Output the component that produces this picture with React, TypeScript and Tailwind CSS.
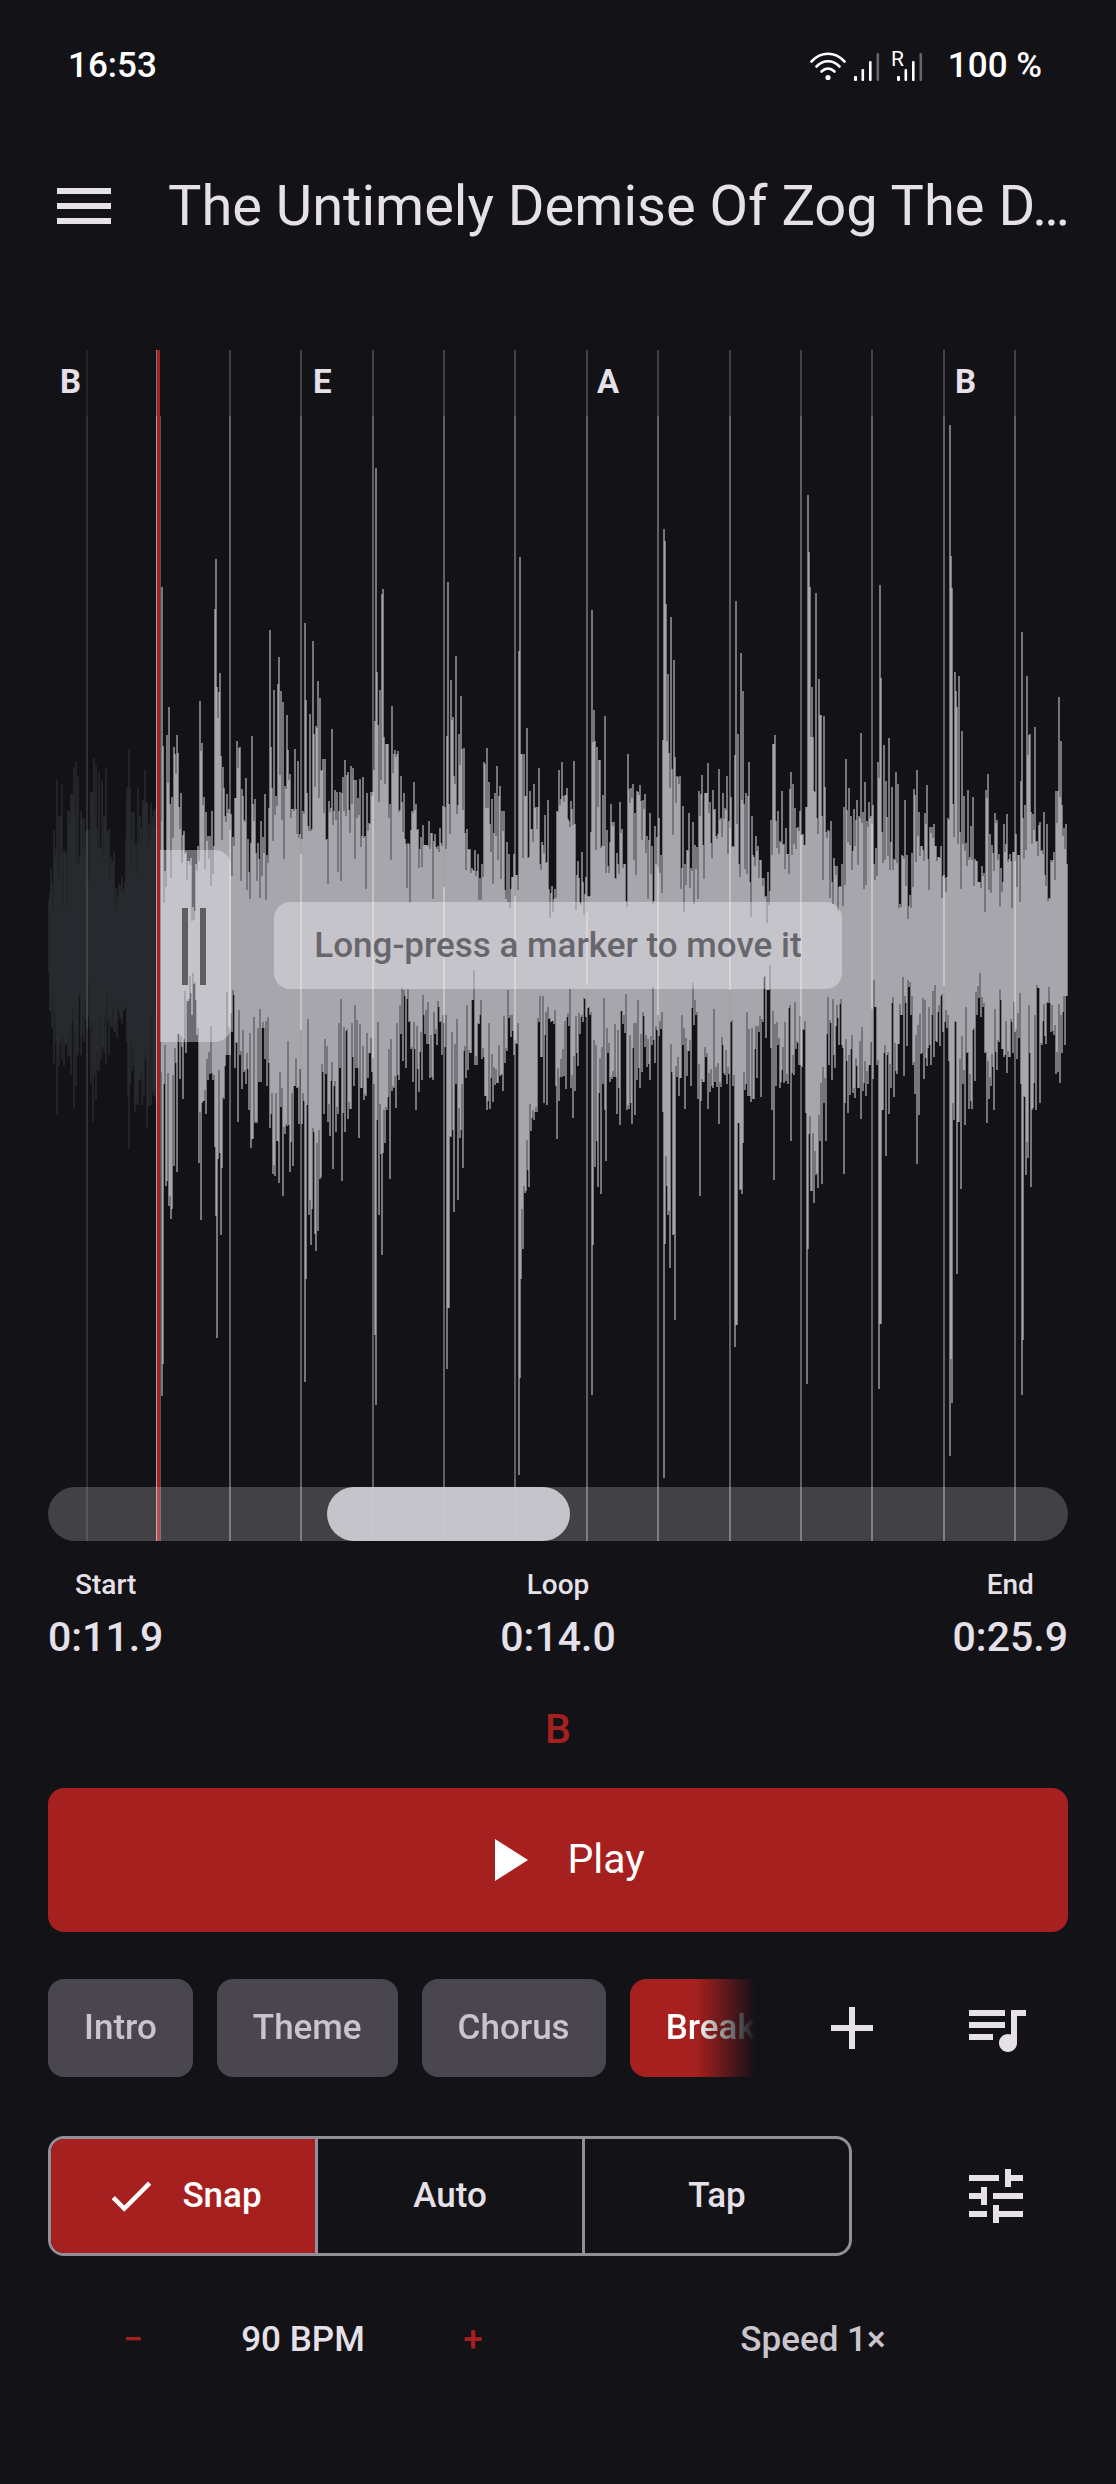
import { useState } from "react"
import { MdAdd, MdCheck, MdMenu, MdPlayArrow, MdQueueMusic, MdTune } from "react-icons/md"

// Canvas of the waveform view. Peaks are stored as [x, y] in page units, see ORIGIN.
const ORIGIN = { x: 48, y: 350 }
const WIDTH = 1020
const HEIGHT = 1191
const CENTER = 945
const LOOP_START = 158

const BEAT_SPACING = 71.4
const BEATS = Array.from({ length: 14 }, (_, i) => Math.round(87 + i * BEAT_SPACING))

const CHORDS = [
  { name: "B", x: 48 },
  { name: "E", x: 301 },
  { name: "A", x: 585 },
  { name: "B", x: 943 },
]

const TOPS = `48,889 51,869 54,830 57,780 59,816 62,784 64,850 68,811 71,794 74,767 76,762 78,777 81,811 84,818 87,830
91,792 94,758 96,766 99,772 102,781 104,816 106,769 109,829 111,857 114,851 119,884 122,877 125,882 126,839 127,787
129,749 130,789 132,812 134,812 136,843 138,788 140,816 143,800 145,770 147,802 149,823 151,803 154,810 156,809
160,820 162,587 163,746 165,871 167,735 169,707 170,804 172,797 173,838 174,747 177,735 178,753 181,793 184,831
186,852 189,861 191,858 193,907 196,864 198,846 200,701 202,743 204,797 206,812 208,836 212,811 214,846 215,609
216,559 217,687 220,673 221,756 223,767 224,788 225,816 227,794 229,809 231,814 233,837 235,798 237,741 240,747
242,789 246,778 248,839 252,736 255,799 258,843 261,821 263,837 265,794 267,855 269,808 270,630 271,747 274,690
276,796 278,684 279,657 281,691 283,702 285,786 287,715 288,750 290,774 292,809 295,749 298,761 300,834 303,811
305,623 306,700 307,793 310,714 313,641 316,726 318,681 320,698 323,759 325,759 327,839 329,801 332,729 335,790
337,792 340,792 343,777 345,760 348,772 351,766 353,768 356,780 358,798 360,779 363,777 365,836 367,793 369,823
371,792 374,770 375,721 376,468 377,672 378,725 380,690 382,594 383,589 384,737 386,744 388,744 390,804 392,706
395,750 398,751 401,776 404,793 405,839 408,843 411,830 412,811 414,782 416,804 418,829 421,837 423,825 425,845
429,821 432,833 435,834 438,846 440,828 443,806 445,807 447,736 448,582 449,804 451,680 453,717 454,776 456,656
459,734 461,696 464,748 465,833 467,829 470,849 472,868 475,850 478,854 482,864 484,762 487,748 489,782 492,799
495,793 497,766 500,786 502,811 504,811 507,842 509,854 513,877 514,854 517,875 519,651 520,557 522,754 524,754
525,796 527,728 530,791 531,829 534,784 536,807 539,768 540,864 542,842 545,815 548,800 549,889 552,886 555,889
557,811 559,770 562,762 565,795 567,788 568,819 571,801 574,761 575,824 578,861 582,852 583,882 586,877 590,896
591,832 592,610 594,710 595,741 597,747 600,760 602,846 603,795 605,716 607,830 611,804 614,822 617,853 620,802
622,829 625,864 628,754 631,788 633,784 635,813 637,791 640,785 643,800 645,794 647,836 650,813 652,846 655,826
657,837 659,818 661,855 663,740 664,529 665,541 666,604 668,674 669,753 671,617 672,769 674,660 675,757 677,776
680,776 683,806 685,864 687,850 689,813 691,868 693,822 695,845 699,791 702,775 703,845 705,793 708,763 710,802
713,790 715,809 719,769 721,818 723,793 725,808 727,776 729,821 731,797 733,846 735,755 736,601 738,734 739,864
741,653 743,691 744,804 746,793 749,762 750,882 752,816 753,855 756,836 758,846 761,860 764,878 766,896 768,872
770,891 771,820 773,744 775,735 776,821 778,811 780,841 782,791 784,844 786,828 788,854 790,789 791,772 793,784
795,808 798,827 800,811 803,834 805,845 806,807 808,495 809,552 810,587 812,687 813,737 814,791 816,593 817,818
819,679 821,715 822,816 824,716 825,787 828,830 831,821 832,882 834,858 837,866 840,886 842,864 844,807 846,759
849,788 851,816 854,809 857,800 859,816 861,733 863,812 865,782 867,821 869,802 871,816 873,805 874,864 876,848
878,762 880,585 881,678 882,832 884,745 886,781 889,738 891,842 892,787 894,859 896,772 898,784 900,904 902,855
905,800 907,855 910,895 912,853 914,789 917,770 919,812 922,846 925,813 927,785 930,827 934,824 936,846 938,857
941,846 944,875 947,877 948,818 950,425 951,556 952,588 953,804 955,672 956,691 957,707 959,676 960,832 962,731
964,796 966,843 968,790 971,826 973,797 975,859 977,861 979,882 982,866 984,873 986,790 988,774 990,834 992,845
995,813 997,820 999,854 1001,868 1004,824 1007,814 1010,854 1013,852 1016,834 1018,855 1021,781 1022,632 1023,818
1025,805 1027,676 1030,734 1031,812 1033,814 1035,727 1037,841 1039,825 1040,822 1042,850 1044,812 1047,824
1049,898 1051,860 1054,852 1056,791 1058,791 1059,697 1061,741 1062,805 1064,828 1066,824 1067,864`

const BOTTOMS = `48,988 50,1011 52,1028 54,1063 57,1115 59,1066 62,1059 64,1066 66,1045 68,1057 71,1075 74,1109 76,1086
78,1055 81,1055 84,1042 87,1028 91,1084 93,1122 96,1100 99,1071 101,1059 104,1053 106,1065 109,1055 112,1028 114,1032
117,1038 120,1018 122,1024 124,1011 127,1042 128,1097 129,1149 130,1084 132,1071 135,1112 138,1105 142,1105 144,1097
147,1128 149,1106 151,1105 154,1096 156,1098 161,1072 162,1396 163,1364 164,1084 166,1186 167,1181 169,1206 171,1219
172,1209 174,1166 176,1063 177,1172 179,1034 180,1079 182,1047 183,1099 186,1053 188,1001 192,1015 194,984 196,1000
197,1035 199,1163 201,1220 202,1103 204,1101 206,1114 208,1080 210,1074 213,1080 215,1147 216,1216 217,1338 218,1159
220,1153 221,1235 222,1168 224,1099 225,1066 228,1055 230,1055 232,1032 235,1068 238,1122 240,1055 242,1089 244,1072
246,1084 249,1110 251,1148 253,1139 255,1123 257,1123 259,1082 261,1082 264,1028 265,1059 267,1086 270,1128 271,1114
273,1174 275,1176 277,1141 279,1183 281,1107 283,1196 285,1134 287,1126 290,1172 293,1166 295,1086 297,1088 299,1124
302,1124 304,1101 305,1382 306,1279 307,1105 309,1215 311,1245 312,1209 314,1132 315,1234 316,1251 318,1231 320,1179
321,1177 323,1072 324,1114 326,1074 328,1122 330,1136 333,1169 334,1086 336,1132 338,1114 340,1068 342,1181 345,1132
348,1119 351,1109 354,1086 356,1068 359,1138 361,1088 364,1100 366,1096 368,1078 370,1053 372,1072 374,1084 375,1335
376,1405 377,1120 379,1215 381,1154 382,1255 383,1153 385,1143 387,1110 388,1097 390,1179 392,1091 394,1088 396,1108
399,1080 401,1034 403,1061 405,996 406,1068 409,1022 411,1049 413,1082 416,1110 419,1092 422,1080 425,1034 427,1044
430,1078 433,1080 435,1034 437,1045 440,1022 442,1055 445,1047 447,1369 448,1308 449,1308 451,1137 454,1212 456,1084
458,1200 460,1138 461,1130 463,1168 464,1051 466,1078 468,1070 471,1053 473,1000 475,1065 477,1065 479,1024 482,1059
484,1057 485,1096 487,1110 490,1109 493,1102 495,1085 498,1083 500,1076 503,1091 505,1063 507,1051 509,1018 511,1037
514,1055 517,1044 519,1475 520,1378 521,1279 523,1249 525,1193 526,1191 529,1187 531,1131 534,1120 537,1112 539,1022
541,1057 544,1103 547,1105 549,1019 551,1022 554,1024 556,1086 557,1139 559,1101 562,1077 564,1076 566,1089 569,1026
571,1088 573,1118 575,1091 578,1066 580,1034 583,1022 586,1017 588,1008 590,1015 592,1395 593,1245 594,1040 595,1167
598,1187 599,1093 601,1194 603,1084 604,998 605,1110 606,1161 608,1053 610,1082 612,1079 614,1077 617,1114 620,1125
622,1011 623,1024 625,1033 627,1110 629,1109 632,1124 635,1115 637,1080 640,1088 642,1072 645,1047 647,1067 650,1080
652,1045 655,1063 657,1030 659,1036 661,1029 663,1112 664,1478 665,1244 667,1186 668,1215 670,1268 672,1072 673,1235
675,1320 677,1077 679,1096 681,1078 683,1045 685,1109 687,1076 689,1051 691,1086 694,1025 696,1015 698,1099 700,1196
701,1101 704,1082 706,1057 708,1109 710,1092 713,1088 717,1087 719,1124 721,1087 725,1075 727,1084 729,1074 731,1022
733,1086 735,1347 736,1325 737,1325 739,1123 740,1190 742,1194 743,1143 745,1090 748,1096 751,1102 754,1099 757,1078
759,1032 761,1097 763,1022 764,977 766,1038 769,990 771,1048 772,1110 774,1180 776,1086 778,1045 780,1088 784,1083
788,1084 791,1141 794,1075 796,1049 799,1065 802,1067 804,1030 806,1113 807,1384 808,1249 809,1134 811,1191 814,1203
816,1175 818,1188 820,1141 822,1184 824,1103 826,1141 827,1034 829,1065 832,1080 835,1068 836,1026 839,1045 843,1048
844,1174 845,1103 848,1113 850,1095 853,1093 855,1098 858,1088 861,1119 863,1091 866,1096 868,1084 870,1065 873,1079
875,1007 877,1065 879,1389 880,1324 881,1324 883,1110 884,1053 886,1156 889,1114 891,1088 892,1003 894,1097 897,1074
899,1044 901,1015 904,1076 907,1046 909,987 911,1015 913,1065 915,1094 917,1164 919,1115 921,1054 924,1079 927,1066
931,1065 934,1057 937,1042 940,1046 943,1032 945,1022 947,1028 949,1061 950,1456 951,1359 952,1403 954,1120 956,1022
957,1274 959,1122 961,1189 963,1084 965,1125 967,1053 969,1109 972,1109 973,1030 975,1081 977,1015 979,998 981,1017
983,1007 985,1053 987,1123 989,1099 991,1086 994,1110 997,1070 999,1042 1002,1049 1004,1057 1007,1073 1010,1057
1013,1053 1017,1059 1019,1038 1021,1084 1022,1395 1023,1340 1025,1097 1026,1175 1028,1158 1030,1053 1031,1187
1032,1110 1036,1110 1038,988 1040,1103 1042,1045 1046,1044 1048,1003 1051,1032 1054,1035 1056,1074 1060,1083
1062,1053 1065,1045 1067,996`

// Fills the columns between two stored peaks with slightly shorter bars.
function expand(source: string, seed: number) {
  const points = source.split(/\s+/).map((pair) => pair.split(",").map(Number))
  const out = new Map<number, number>()
  let state = seed
  const random = () => {
    state = (state * 1103515245 + 12345) % 2147483648
    return state / 2147483648
  }

  points.forEach(([x, y], i) => {
    out.set(x, y - CENTER)
    const next = points[i + 1]
    if (!next) return
    const a = y - CENTER
    const b = next[1] - CENTER
    const base = Math.abs(a) < Math.abs(b) ? a : b
    for (let col = x + 1; col < next[0]; col++) {
      const r = random()
      out.set(col, Math.round(base * (1 - r * r * 0.6)))
    }
  })
  return out
}

const tops = expand(TOPS, 7)
const bottoms = expand(BOTTOMS, 91)

// Bars are two units wide on a one unit pitch, so neighbours overlap and get brighter.
function barPath(from: number, to: number, parity: number) {
  let d = ""
  for (let x = from; x <= to; x++) {
    if (x % 2 !== parity) continue
    const top = CENTER + (tops.get(x) ?? -60)
    const bottom = CENTER + (bottoms.get(x) ?? 60)
    d += `M${x - ORIGIN.x} ${top - ORIGIN.y}V${bottom - ORIGIN.y}`
  }
  return d
}

function Waveform() {
  return (
    <svg viewBox={`0 0 ${WIDTH} ${HEIGHT}`} className="block w-full" role="img" aria-label="Waveform">
      {[0, 1].map((parity) => (
        <g key={parity} strokeWidth={2} fill="none">
          <path d={barPath(49, 156, parity)} stroke="#282b2f" opacity={0.75} />
          <path d={barPath(161, 1067, parity)} stroke="#d3d2d8" opacity={0.52} />
        </g>
      ))}
      {BEATS.map((beat, i) => (
        <g key={beat} fill="#ffffff">
          <rect x={beat - ORIGIN.x - 1} y={0} width={2} height={66} opacity={i === 0 ? 0.08 : 0.2} />
          <rect x={beat - ORIGIN.x - 1} y={66} width={2} height={HEIGHT - 66} opacity={i === 0 ? 0.12 : 0.33} />
        </g>
      ))}
      <rect x={108} y={0} width={1} height={66} fill="#77767c" />
      <rect x={108} y={66} width={1} height={HEIGHT - 66} fill="#a7a6ac" />
      <rect x={112} y={66} width={1} height={HEIGHT - 66} fill="#55545a" />
      <rect x={LOOP_START - ORIGIN.x - 1} y={0} width={3} height={HEIGHT} fill="#a72020" />
    </svg>
  )
}

function StatusBar() {
  return (
    <div className="flex h-[132px] items-center justify-between pl-5 pr-[26px] text-[35px] font-medium text-white">
      <span>16:53</span>
      <div className="flex items-center">
        <svg width="36" height="30" viewBox="0 0 36 30" fill="none" stroke="#fff" strokeWidth="2.6" strokeLinecap="round">
          <path d="M1.5 10.5C11 .2 25 .2 34.500 10.500" />
          <path d="M6.500 15.500C13 8.500 23 8.500 29.500 15.500" />
          <path d="M11.500 20.500C15.500 16.500 20.500 16.500 24.500 20.500" />
          <circle cx="18" cy="26.500" r="2.600" fill="#fff" stroke="none" />
        </svg>
        <svg className="ml-2" width="26" height="32" viewBox="0 0 26 32" fill="#fff">
          <rect x="0" y="26" width="3" height="5" rx="1" />
          <rect x="7.500" y="19" width="2.600" height="12" rx="1" />
          <rect x="15" y="11" width="2.600" height="20" rx="1" />
          <rect x="22.500" y="3" width="2.600" height="28" rx="1" opacity=".35" />
        </svg>
        <svg className="ml-3 overflow-visible" width="32" height="32" viewBox="0 0 32 32" fill="#fff">
          <text x="-1" y="16" fontSize="21" fontWeight="400">
            R
          </text>
          <rect x="5" y="26" width="3" height="5" rx="1" />
          <rect x="12.500" y="19" width="2.600" height="12" rx="1" />
          <rect x="20" y="11" width="2.600" height="20" rx="1" />
          <rect x="27.500" y="3" width="2.600" height="28" rx="1" opacity=".35" />
        </svg>
        <span className="ml-6">100 %</span>
      </div>
    </div>
  )
}

function LoopEditor() {
  return (
    <section className="relative mt-[70px]">
      <Waveform />
      {CHORDS.map((chord) => (
        <span
          key={chord.x}
          className="absolute top-3 pl-3 text-[33px] leading-10 font-bold"
          style={{ left: `${((chord.x - ORIGIN.x) / WIDTH) * 100}%` }}
        >
          {chord.name}
        </span>
      ))}

      <button
        aria-label="Move loop start"
        className="absolute top-[42%] left-[11%] flex h-48 w-[71px] items-center justify-center gap-3 rounded-r-2xl bg-[#f4f3fa]/40 pr-1"
      >
        <span className="h-[77px] w-1.5 bg-[#5f5e63]" />
        <span className="h-[77px] w-1.5 bg-[#5f5e63]" />
      </button>

      <div className="absolute inset-x-0 top-[552px] flex justify-center">
        <p className="rounded-2xl bg-[#f4f3fa]/40 px-10 py-5 text-[35px] leading-[47px] font-medium text-[#67666b]">
          Long-press a marker to move it
        </p>
      </div>

      <div className="absolute inset-x-0 bottom-0 h-[54px] rounded-full bg-white/20">
        <div className="ml-[27.400%] h-full w-[23.800%] rounded-full bg-[#cccbd2]/95" />
      </div>
    </section>
  )
}

function TimeValue({ label, value }: { label: string; value: string }) {
  return (
    <div className="flex flex-col items-center font-medium">
      <span className="text-[28px] leading-8">{label}</span>
      <span className="mt-3 text-[41px] leading-[48px]">{value}</span>
    </div>
  )
}

const SECTIONS = ["Intro", "Theme", "Chorus", "Break"]
const MODES = ["Snap", "Auto", "Tap"]

export default function App() {
  const [section, setSection] = useState("Break")
  const [mode, setMode] = useState("Snap")
  const [bpm, setBpm] = useState(90)

  return (
    <main className="min-h-screen bg-[#131217] px-12 font-['Roboto',sans-serif] text-[#e6e1e9]">
      <StatusBar />

      <header className="-mr-3 flex h-[148px] items-center">
        <button aria-label="Menu" className="shrink-0">
          <MdMenu size={72} />
        </button>
        <h1 className="ml-12 truncate text-[56px] leading-[72px]">The Untimely Demise Of Zog The D…</h1>
      </header>

      <LoopEditor />

      <div className="mt-7 flex justify-between">
        <TimeValue label="Start" value="0:11.9" />
        <TimeValue label="Loop" value="0:14.0" />
        <TimeValue label="End" value="0:25.9" />
      </div>

      <p className="mt-11 text-center text-[41px] leading-[48px] font-medium text-[#a72020]">B</p>

      <button className="mt-[35px] flex h-36 w-full items-center justify-center gap-6 rounded-2xl bg-[#a72020] text-[41px] text-white">
        <MdPlayArrow size={72} />
        Play
      </button>

      <div className="mt-6 flex h-36 items-center">
        <div className="mr-6 flex min-w-0 flex-1 gap-6 overflow-hidden [mask-image:linear-gradient(to_right,#000_calc(100%-60px),transparent)]">
          {SECTIONS.map((name) => (
            <button
              key={name}
              onClick={() => setSection(name)}
              className={`h-[98px] shrink-0 rounded-2xl px-9 text-[35px] font-medium ${
                section === name ? "bg-[#a72020] text-white" : "bg-[#49464f] text-[#cac5cd]"
              }`}
            >
              {name}
            </button>
          ))}
        </div>
        <button aria-label="Add section" className="flex size-36 shrink-0 items-center justify-center">
          <MdAdd size={72} />
        </button>
        <button aria-label="Playlist" className="flex size-36 shrink-0 items-center justify-center">
          <MdQueueMusic size={72} />
        </button>
      </div>

      <div className="mt-6 flex h-36 items-center justify-between">
        <div className="mr-[72px] flex h-[120px] flex-1 divide-x-3 divide-[#938f99] overflow-hidden rounded-2xl border-3 border-[#938f99]">
          {MODES.map((name) => (
            <button
              key={name}
              onClick={() => setMode(name)}
              aria-pressed={mode === name}
              className={`flex flex-1 items-center justify-center gap-6 text-[35px] font-medium ${
                mode === name ? "bg-[#a72020] text-white" : ""
              }`}
            >
              {mode === name && <MdCheck size={54} />}
              {name}
            </button>
          ))}
        </div>
        <button aria-label="Settings" className="flex size-36 shrink-0 items-center justify-center">
          <MdTune size={72} />
        </button>
      </div>

      <div className="grid h-36 grid-cols-2 items-center text-[35px] font-medium">
        <div className="grid grid-cols-3 items-center text-center">
          <button aria-label="Slower" className="text-[#a72020]" onClick={() => setBpm(bpm - 1)}>
            −
          </button>
          <span className="whitespace-nowrap">{bpm} BPM</span>
          <button aria-label="Faster" className="text-[#a72020]" onClick={() => setBpm(bpm + 1)}>
            +
          </button>
        </div>
        <button className="text-[#cac5cd]">Speed 1×</button>
      </div>
    </main>
  )
}
